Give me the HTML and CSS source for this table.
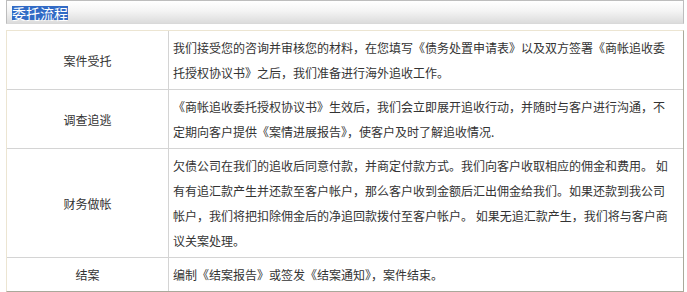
FILE: index.html
```html
<!DOCTYPE html>
<html lang="zh-CN">
<head>
<meta charset="utf-8">
<title>委托流程</title>
<link rel="stylesheet" href="styles.css">
</head>
<body>
<div class="page">
  <div class="title-bar"><span class="title">委托流程</span></div>
  <table class="flow">
    <tr>
      <td class="step">案件受托</td>
      <td class="desc">我们接受您的咨询并审核您的材料，在您填写《债务处置申请表》以及双方签署《商帐追收委托授权协议书》之后，我们准备进行海外追收工作。</td>
    </tr>
    <tr>
      <td class="step">调查追逃</td>
      <td class="desc">《商帐追收委托授权协议书》生效后，我们会立即展开追收行动，并随时与客户进行沟通，不定期向客户提供《案情进展报告》，使客户及时了解追收情况.</td>
    </tr>
    <tr>
      <td class="step">财务做帐</td>
      <td class="desc">欠债公司在我们的追收后同意付款，并商定付款方式。我们向客户收取相应的佣金和费用。 如有有追汇款产生并还款至客户帐户，那么客户收到金额后汇出佣金给我们。如果还款到我公司帐户，我们将把扣除佣金后的净追回款拨付至客户帐户。 如果无追汇款产生，我们将与客户商议关案处理。</td>
    </tr>
    <tr>
      <td class="step">结案</td>
      <td class="desc">编制《结案报告》或签发《结案通知》，案件结束。</td>
    </tr>
  </table>
</div>
</body>
</html>
```
FILE: styles.css
```css
html, body {
  margin: 0;
  padding: 0;
  background: #ffffff;
}

body {
  font-family: "Noto Sans CJK SC", "Liberation Sans", sans-serif;
  font-size: 12px;
  color: #333333;
}

.page {
  width: 678px;
  padding-left: 6px;
}

.title-bar {
  height: 24px;
  box-sizing: border-box;
  border: 1px solid #bdbdbd;
  border-bottom-color: #d9d9d9;
  background: linear-gradient(#ffffff 0%, #f4f4f4 45%, #dcdcdc 100%);
  padding: 4px 0 0 5px;
}

.title {
  display: inline-block;
  font-size: 14px;
  line-height: 14px;
  height: 14px;
  background: #316ac5;
  color: #ffffff;
}

.flow {
  margin-top: 6px;
  width: 678px;
  table-layout: fixed;
  border-collapse: separate;
  border-spacing: 0;
  border: 1px solid;
  border-color: #ece5d2 #a9a99b #a9a99b #ece5d2;
}

.flow td {
  border-bottom: 1px solid #d4d4d4;
  line-height: 25px;
  vertical-align: middle;
}

.flow tr:last-child td {
  border-bottom: none;
}

.step {
  width: 162px;
  box-sizing: border-box;
  border-right: 1px solid #d4d4d4;
  text-align: center;
  padding: 4px 0;
}

.desc {
  padding: 4px 10px 4px 4px;
  text-align: left;
}
```
